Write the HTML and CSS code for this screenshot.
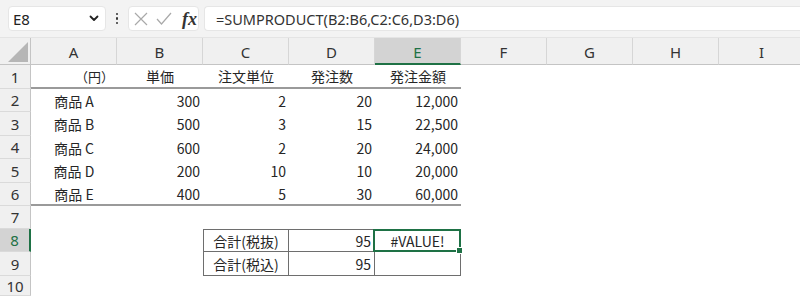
FILE: index.html
```html
<!DOCTYPE html>
<html lang="ja">
<head>
<meta charset="utf-8">
<link rel="stylesheet" href="styles.css">
</head>
<body>
<div class="band">
  <div class="namebox"><span class="nb-text">E8</span>
    <svg class="chev" width="10" height="7" viewBox="0 0 10 7"><path d="M1.5 1.5 L5 5 L8.5 1.5" fill="none" stroke="#222" stroke-width="1.8" stroke-linecap="round" stroke-linejoin="round"/></svg>
  </div>
  <div class="dots"><i></i><i></i><i></i></div>
  <div class="fxbox">
    <svg class="ic" width="14" height="14" viewBox="0 0 14 14"><path d="M1 1 L13 13 M13 1 L1 13" stroke="#a9a9a9" stroke-width="1.2" fill="none"/></svg>
    <svg class="ic" width="16" height="13" viewBox="0 0 16 13"><path d="M1 7 L5.5 12 L15 1" stroke="#a9a9a9" stroke-width="1.2" fill="none"/></svg>
    <span class="fx">fx</span>
  </div>
  <div class="formula">=SUMPRODUCT(B2:B6,C2:C6,D3:D6)</div>
</div>
<div class="sheet">
  <div class="corner"><div class="tri"></div></div>
  <div class="ch">A</div><div class="ch">B</div><div class="ch">C</div><div class="ch">D</div><div class="ch sel">E</div><div class="ch">F</div><div class="ch">G</div><div class="ch">H</div><div class="ch">I</div>

  <div class="rh">1</div>
  <div class="c r tb yen">（円）</div><div class="c m tb">単価</div><div class="c m tb">注文単位</div><div class="c m tb">発注数</div><div class="c m tb">発注金額</div><div class="c"></div><div class="c"></div><div class="c"></div><div class="c"></div>

  <div class="rh">2</div>
  <div class="c m">商品 A</div><div class="c r">300</div><div class="c r">2</div><div class="c r">20</div><div class="c r">12,000</div><div class="c"></div><div class="c"></div><div class="c"></div><div class="c"></div>

  <div class="rh">3</div>
  <div class="c m">商品 B</div><div class="c r">500</div><div class="c r">3</div><div class="c r">15</div><div class="c r">22,500</div><div class="c"></div><div class="c"></div><div class="c"></div><div class="c"></div>

  <div class="rh">4</div>
  <div class="c m">商品 C</div><div class="c r">600</div><div class="c r">2</div><div class="c r">20</div><div class="c r">24,000</div><div class="c"></div><div class="c"></div><div class="c"></div><div class="c"></div>

  <div class="rh">5</div>
  <div class="c m">商品 D</div><div class="c r">200</div><div class="c r">10</div><div class="c r">10</div><div class="c r">20,000</div><div class="c"></div><div class="c"></div><div class="c"></div><div class="c"></div>

  <div class="rh">6</div>
  <div class="c m tb">商品 E</div><div class="c r tb">400</div><div class="c r tb">5</div><div class="c r tb">30</div><div class="c r tb">60,000</div><div class="c"></div><div class="c"></div><div class="c"></div><div class="c"></div>

  <div class="rh">7</div>
  <div class="c"></div><div class="c"></div><div class="c"></div><div class="c"></div><div class="c"></div><div class="c"></div><div class="c"></div><div class="c"></div><div class="c"></div>

  <div class="rh sel">8</div>
  <div class="c"></div><div class="c"></div><div class="c m bx bl bt">合計(税抜)</div><div class="c r bx bt">95</div><div class="c m bx bt active">#VALUE!</div><div class="c"></div><div class="c"></div><div class="c"></div><div class="c"></div>

  <div class="rh">9</div>
  <div class="c"></div><div class="c"></div><div class="c m bx bl">合計(税込)</div><div class="c r bx">95</div><div class="c m bx"></div><div class="c"></div><div class="c"></div><div class="c"></div><div class="c"></div>

  <div class="rh">10</div>
  <div class="c"></div><div class="c"></div><div class="c"></div><div class="c"></div><div class="c"></div><div class="c"></div><div class="c"></div><div class="c"></div><div class="c"></div>
</div>
</body>
</html>
```
FILE: styles.css
```css
html, body {
  margin: 0;
  padding: 0;
  background: #ffffff;
}
body {
  width: 800px;
  height: 296px;
  overflow: hidden;
  font-family: "Noto Sans CJK JP", "Noto Sans", sans-serif;
  color: #262626;
}
.band {
  height: 38px;
  background: #f3f3f3;
  display: flex;
  align-items: center;
  padding-left: 8px;
  box-sizing: border-box;
  border-bottom: 1px solid #e4e4e4;
}
.namebox {
  width: 98px;
  height: 25px;
  background: #fff;
  border-radius: 4px;
  box-sizing: border-box;
  border: 1px solid #e6e6e6;
  display: flex;
  align-items: center;
  justify-content: space-between;
  padding: 0 6px 0 4px;
}
.nb-text {
  font-family: "Noto Sans", sans-serif;
  font-size: 15px;
  color: #222;
}
.dots {
  width: 22px;
  display: flex;
  flex-direction: column;
  align-items: center;
  gap: 2px;
}
.dots i {
  display: block;
  width: 2.5px;
  height: 2.5px;
  border-radius: 50%;
  background: #333;
}
.fxbox {
  width: 71px;
  height: 25px;
  background: #fff;
  border-radius: 4px;
  border: 1px solid #e6e6e6;
  box-sizing: border-box;
  display: flex;
  align-items: center;
  padding-left: 5px;
  gap: 8px;
}
.fx {
  font-family: "Liberation Serif", "DejaVu Serif", serif;
  font-style: italic;
  font-weight: bold;
  font-size: 18px;
  color: #333;
  margin-left: 2px;
  line-height: 1;
}
.formula {
  flex: 1;
  margin-left: 5px;
  height: 25px;
  background: #fff;
  border-radius: 4px 0 0 4px;
  border: 1px solid #e6e6e6;
  border-right: none;
  box-sizing: border-box;
  display: flex;
  align-items: center;
  padding-left: 11px;
  font-family: "Noto Sans", sans-serif;
  font-size: 14.5px;
  color: #333;
}
.sheet {
  display: grid;
  grid-template-columns: 31px repeat(9, 86px);
  grid-template-rows: 27px 24px 23px 24px 23px 24px 23px 23px 23px 24px 20px;
}
.corner {
  background: #f0f0f0;
  border-right: 1px solid #c4c4c4;
  border-bottom: 1px solid #c4c4c4;
  box-sizing: border-box;
  position: relative;
}
.tri {
  position: absolute;
  right: 2px;
  bottom: 2px;
  width: 0;
  height: 0;
  border-left: 20px solid transparent;
  border-bottom: 20px solid #b6b6b6;
}
.ch {
  background: #f0f0f0;
  box-sizing: border-box;
  border-bottom: 1px solid #c4c4c4;
  border-right: 1px solid #d6d6d6;
  display: flex;
  align-items: center;
  justify-content: center;
  font-family: "Noto Sans", sans-serif;
  font-size: 15px;
  color: #333;
  padding-top: 2px;
}
.ch.sel {
  background: #d3d3d3;
  color: #1e7145;
  border-bottom: 2px solid #1e7145;
}
.rh {
  background: #f0f0f0;
  box-sizing: border-box;
  border-right: 1px solid #c4c4c4;
  border-bottom: 1px solid #dadada;
  display: flex;
  align-items: center;
  justify-content: center;
  font-family: "Noto Sans", sans-serif;
  font-size: 15px;
  color: #333;
}
.rh.sel {
  background: #d3d3d3;
  color: #1e7145;
  border-right: 2px solid #1e7145;
}
.c {
  box-sizing: border-box;
  display: flex;
  align-items: center;
  font-size: 14px;
  padding: 0 3px;
  white-space: nowrap;
}
.c.r { justify-content: flex-end; }
.c.m { justify-content: center; }
.c.yen { font-size: 13px; }
.c.tb {
  border-bottom: 2px solid #9a9a9a;
}
.c.bx {
  border-right: 1px solid #6e6e6e;
  border-bottom: 1px solid #6e6e6e;
}
.c.bl { border-left: 1px solid #6e6e6e; }
.c.bt { border-top: 1px solid #6e6e6e; }
.c.active { position: relative; }
.c.active::after {
  content: "";
  position: absolute;
  left: -2px;
  top: -1px;
  right: -1px;
  bottom: -1px;
  border: 2px solid #1e7145;
}
.c.active::before {
  content: "";
  position: absolute;
  right: -3px;
  bottom: -3px;
  width: 5px;
  height: 5px;
  background: #1e7145;
  border: 1px solid #fff;
  z-index: 2;
}
```
